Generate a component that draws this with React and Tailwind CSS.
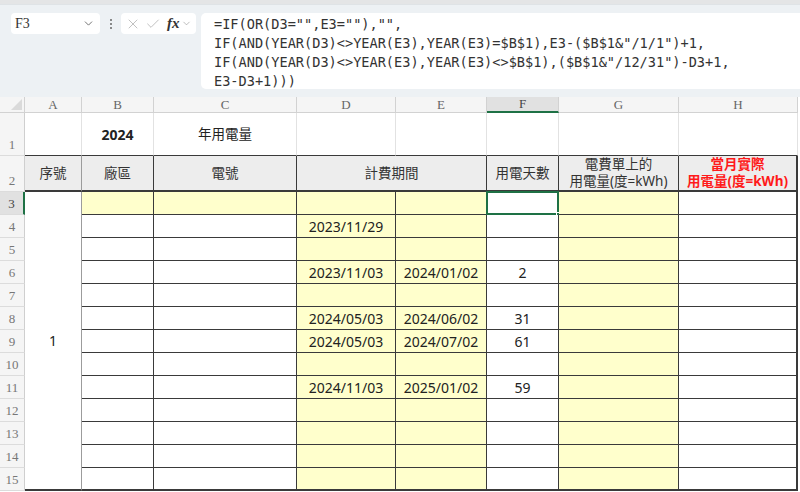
import { ChevronDown, X, Check } from 'lucide-react';

const sans = "font-['Noto_Sans','Noto_Sans_CJK_TC',sans-serif]";
const serif = "font-['Liberation_Serif',serif]";

const letters = ['A', 'B', 'C', 'D', 'E', 'F', 'G', 'H'];

const data = {
  4: { D: '2023/11/29' },
  6: { D: '2023/11/03', E: '2024/01/02', F: '2' },
  8: { D: '2024/05/03', E: '2024/06/02', F: '31' },
  9: { D: '2024/05/03', E: '2024/07/02', F: '61' },
  11: { D: '2024/11/03', E: '2025/01/02', F: '59' },
};

const formula = [
  '=IF(OR(D3="",E3=""),"",',
  'IF(AND(YEAR(D3)<>YEAR(E3),YEAR(E3)=$B$1),E3-($B$1&"/1/1")+1,',
  'IF(AND(YEAR(D3)<>YEAR(E3),YEAR(E3)<>$B$1),($B$1&"/12/31")-D3+1,',
  'E3-D3+1)))',
];

function Toolbar() {
  return (
    <div className="h-[97px] bg-[#edf1f4] flex flex-col">
      <div className="h-[5px] bg-[#e4e5e6] border-b border-[#dfe3e6]" />
      <div className="flex items-start pt-[8px] pl-[11px]">
        {/* name box */}
        <div className="w-[89px] h-[21px] bg-white rounded-[4px] flex items-center justify-between pl-[4px] pr-[5px]">
          <span className={`${serif} text-[14px] text-[#333]`}>F3</span>
          <ChevronDown size={13} strokeWidth={1.5} className="text-[#555]" />
        </div>
        <div className="w-[21px] h-[21px] flex flex-col items-center justify-center gap-[2px]">
          <span className="w-[2px] h-[2px] bg-[#666] rounded-full" />
          <span className="w-[2px] h-[2px] bg-[#666] rounded-full" />
          <span className="w-[2px] h-[2px] bg-[#666] rounded-full" />
        </div>
        {/* function box */}
        <div className="w-[75px] h-[21px] bg-white rounded-[4px] flex items-center pl-[4px] gap-[4px]">
          <X size={16} strokeWidth={1.1} className="text-[#aaa]" />
          <Check size={16} strokeWidth={1.1} className="text-[#aaa]" />
          <span className={`${serif} italic font-bold text-[15px] text-[#333] leading-none ml-[2px]`}>fx</span>
          <ChevronDown size={11} strokeWidth={1.4} className="text-[#999] -ml-[3px]" />
        </div>
        {/* formula box */}
        <div className="ml-[5px] flex-1 h-[76px] bg-white rounded-l-[5px] pl-[13px] pt-[2px]">
          {formula.map((l, i) => (
            <div key={i} className="font-['DejaVu_Sans_Mono',monospace] text-[13.6px] leading-[19px] text-[#333] whitespace-pre">
              {l}
            </div>
          ))}
        </div>
      </div>
    </div>
  );
}

function Sheet() {
  const cells = [];

  // column header row
  cells.push(
    <div key="corner" className="bg-[#f5f5f5] border-r border-b border-[#d2d2d2] relative">
      <div className="absolute right-[2px] bottom-[2px] w-0 h-0 border-l-[11px] border-l-transparent border-b-[11px] border-b-[#dadada]" />
    </div>
  );
  letters.forEach((c) => {
    const sel = c === 'F';
    cells.push(
      <div
        key={'h' + c}
        className={`${serif} text-[13px] flex items-center justify-center border-r ${
          sel ? 'bg-[#e1e1e1] text-[#444] border-b-2 border-b-[#1e7145] border-r-[#d2d2d2]' : 'bg-[#f5f5f5] text-[#666] border-b border-[#d2d2d2]'
        }`}
      >
        {c}
      </div>
    );
  });

  const rowHead = (n) => (
    <div
      key={'r' + n}
      className={`${serif} text-[13px] flex items-end justify-center pb-[1px] border-b border-[#dcdcdc] ${
        n === 3 ? 'bg-[#e1e1e1] text-[#444] border-r-2 border-r-[#1e7145]' : 'bg-[#f5f5f5] text-[#777] border-r border-r-[#cfcfcf]'
      }`}
    >
      {n}
    </div>
  );

  // row 1
  cells.push(rowHead(1));
  letters.forEach((c) => {
    cells.push(
      <div
        key={'1' + c}
        className={`${sans} flex items-center justify-center bg-white border-r border-r-[#e2e2e2] border-b border-b-[#3a3a3a] text-[#222] ${
          c === 'B' ? 'font-bold text-[14px]' : 'text-[13.5px]'
        }`}
      >
        {c === 'B' ? '2024' : c === 'C' ? '年用電量' : ''}
      </div>
    );
  });

  // row 2
  cells.push(rowHead(2));
  const hdr = `${sans} bg-[#ededed] border-b-2 border-b-[#3a3a3a] border-r flex items-center justify-center text-center text-[13.5px] text-[#333]`;
  cells.push(<div key="2A" className={`${hdr} border-r-[#9c9c9c]`}>序號</div>);
  cells.push(<div key="2B" className={`${hdr} border-r-[#3a3a3a]`}>廠區</div>);
  cells.push(<div key="2C" className={`${hdr} border-r-[#3a3a3a]`}>電號</div>);
  cells.push(<div key="2D" className={`${hdr} border-r-[#3a3a3a] col-span-2`}>計費期間</div>);
  cells.push(<div key="2F" className={`${hdr} border-r-[#3a3a3a]`}>用電天數</div>);
  cells.push(
    <div key="2G" className={`${hdr} border-r-[#3a3a3a] flex-col text-[12.5px] leading-[17px]`}>
      <span>電費單上的</span>
      <span>用電量(度=kWh)</span>
    </div>
  );
  cells.push(
    <div key="2H" className={`${hdr} border-r-2 border-r-[#3a3a3a] flex-col text-[12.5px] leading-[17px] text-[#ff1a1a] font-bold`}>
      <span>當月實際</span>
      <span>用電量(度=kWh)</span>
    </div>
  );

  // rows 3 - 15
  for (let r = 3; r <= 15; r++) {
    cells.push(rowHead(r));
    const last = r === 15;
    const bb = last ? 'border-b-2' : 'border-b';
    if (r === 3) {
      cells.push(
        <div
          key="A3"
          className={`${sans} row-[span_13_/_span_13] bg-white border-r border-r-[#9c9c9c] border-b-2 border-b-[#3a3a3a] flex items-center justify-center text-[14px] text-[#222]`}
        >
          1
        </div>
      );
    }
    ['B', 'C', 'D', 'E', 'F', 'G', 'H'].forEach((c) => {
      const yellow = c === 'D' || c === 'E' || c === 'G' || (r === 3 && (c === 'B' || c === 'C'));
      const val = data[r] && data[r][c];
      cells.push(
        <div
          key={r + c}
          className={`${sans} relative flex items-center justify-center text-[14px] text-[#222] ${bb} border-b-[#3a3a3a] ${
            c === 'H' ? 'border-r-2' : 'border-r'
          } border-r-[#3a3a3a] ${yellow ? 'bg-[#ffffcc]' : 'bg-white'}`}
        >
          {val}
          {r === 3 && c === 'F' && (
            <>
              <div className="absolute -left-[1px] -top-[1px] -right-[1px] -bottom-[1px] border-2 border-[#1e7145]" />
              <div className="absolute -right-[3px] -bottom-[3px] w-[5px] h-[5px] bg-[#1e7145] border border-white" />
            </>
          )}
        </div>
      );
    });
  }

  return (
    <div className="grid w-[798px] grid-cols-[25px_57px_72px_143px_99px_91px_72px_120px_119px] grid-rows-[16px_43px_36px_repeat(13,23px)]">
      {cells}
    </div>
  );
}

export default function App() {
  return (
    <div className="w-[800px] h-[492px] bg-white overflow-hidden">
      <Toolbar />
      <Sheet />
    </div>
  );
}
